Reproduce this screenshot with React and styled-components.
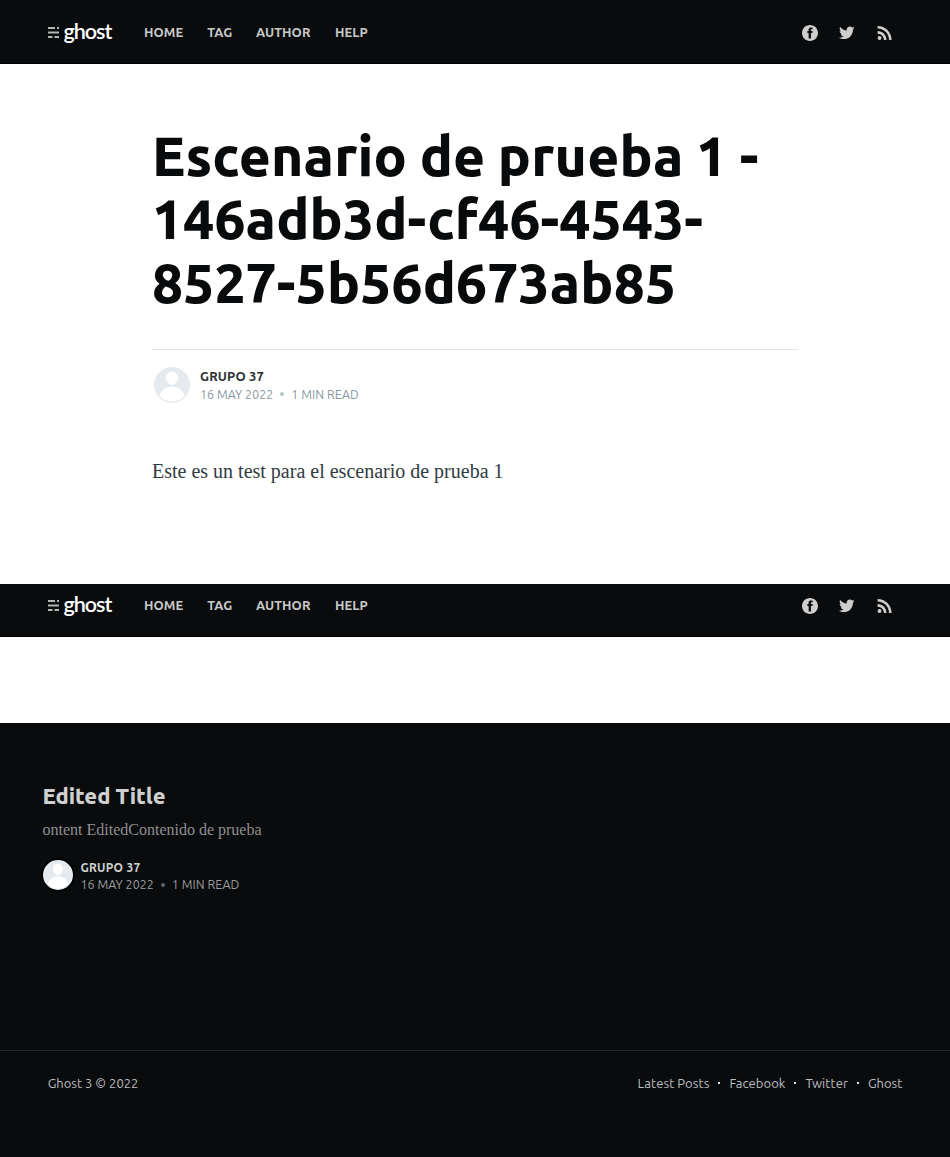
import React from 'react';
import styled, { createGlobalStyle } from 'styled-components';

const GlobalStyle = createGlobalStyle`
  *, *::before, *::after { box-sizing: border-box; }
  html, body, #root { margin: 0; padding: 0; }
  body {
    background: #fff;
    color: #3a4145;
    font-family: Ubuntu, "Noto Sans", "Open Sans", sans-serif;
  }
  a { color: inherit; text-decoration: none; }
  h1, h2, p { margin: 0; }
`;

const Bar = styled.header`
  display: flex;
  align-items: center;
  height: ${(p) => (p.$short ? 53 : 64)}px;
  padding: 0 47px ${(p) => (p.$short ? 11 : 0)}px 48px;
  background: #0a0b0c;
  border-bottom: 1px solid #000;
`;

const Brand = styled.a`
  display: flex;
  align-items: center;
  width: 96px;
  height: 30px;
`;

const LogoMark = styled.svg`
  display: block;
  width: 11px;
  height: 12px;
  margin: 1px 4.5px 0 0;
`;

const LogoText = styled.span`
  margin-top: -2px;
  color: #fff;
  font: 600 21.5px/30px Lato, sans-serif;
  letter-spacing: -1px;
`;

const Menu = styled.nav`
  display: flex;
  flex: 1;
`;

const MenuLink = styled.a`
  width: ${(p) => p.$width}px;
  color: #c8caca;
  font-size: 13px;
  font-weight: 600;
  line-height: 20px;
  letter-spacing: 0.08px;
  white-space: nowrap;
`;

const Social = styled.div`
  display: flex;
  align-items: center;
  margin: 3px 7.5px 0 0;
`;

const SocialLink = styled.a`
  display: block;
  margin-top: ${(p) => p.$lift || 0}px;
  margin-left: ${(p) => p.$gap || 0}px;

  svg {
    display: block;
    width: ${(p) => p.$size}px;
    height: ${(p) => p.$size}px;
    fill: #cecece;
  }
`;

const Article = styled.article`
  width: 646px;
  height: 520px;
  margin: 0 auto;
  padding-top: 60px;
`;

const Title = styled.h1`
  color: #090a0b;
  font-size: 55px;
  font-weight: 800;
  line-height: 63.25px;
  letter-spacing: 0.18px;
  word-spacing: -0.9px;
`;

const Byline = styled.div`
  display: flex;
  align-items: flex-start;
  margin-top: 35px;
  padding: 15px 0 0;
  border-top: 1px solid #e3e6e8;
`;

const Avatar = styled.span`
  display: block;
  flex: none;
  width: ${(p) => p.$size}px;
  height: ${(p) => p.$size}px;
  border: 2px solid ${(p) => (p.$dark ? '#000' : '#fff')};
  border-radius: 50%;
  background: #e4eaee;
  overflow: hidden;

  svg { display: block; width: 100%; height: 100%; fill: #fff; }
`;

const Meta = styled.div`
  display: flex;
  flex-direction: column;
  margin: ${(p) => (p.$dark ? '1px 0 0 5.5px' : '2px 0 0 8px')};
`;

const AuthorName = styled.span`
  color: ${(p) => (p.$dark ? '#d0d1d1' : '#2b3034')};
  font-size: ${(p) => (p.$dark ? 12 : 13)}px;
  font-weight: 600;
  line-height: ${(p) => (p.$dark ? 17 : 18)}px;
  letter-spacing: ${(p) => (p.$dark ? 0.25 : 0.15)}px;
`;

const MetaLine = styled.span`
  display: flex;
  color: ${(p) => (p.$dark ? '#9b9e9f' : '#87979f')};
  font-size: 12.4px;
  line-height: ${(p) => (p.$dark ? 17 : 18)}px;
  letter-spacing: 0.05px;
  white-space: nowrap;
`;

const Bullet = styled.span`
  width: 4px;
  height: 4px;
  margin: 7px 7px 0 7px;
  border-radius: 50%;
  background: currentColor;
  opacity: 0.6;
`;

const Body = styled.p`
  margin-top: 50px;
  font: 20px/32px "Liberation Serif", serif;
  color: #313b42;
`;

const Spacer = styled.div`
  height: 86px;
  background: #fff;
`;

const ReadNext = styled.aside`
  height: 327px;
  padding: 58px 42.5px 0;
  background: #0a0b0c;
`;

const CardTitle = styled.h2`
  color: #d0d0d0;
  font-size: 22px;
  font-weight: 800;
  line-height: 30px;
  letter-spacing: -0.05px;
`;

const Excerpt = styled.p`
  margin-top: 6px;
  color: #8e8f90;
  font: 16px/26px "Liberation Serif", serif;
`;

const CardByline = styled.div`
  display: flex;
  margin: 15px 0 0 -1.5px;
`;

const Footer = styled.footer`
  display: flex;
  justify-content: space-between;
  height: 107px;
  padding: 22px 47.7px 0;
  border-top: 1px solid #242627;
  background: #0a0b0c;
  color: #bdbfc0;
  font-size: 13px;
  line-height: 20px;
`;

const FooterNav = styled.nav`
  display: flex;
`;

const FooterLink = styled.a`
  letter-spacing: ${(p) => p.$track}px;

  &:not(:first-child)::before {
    content: "";
    display: inline-block;
    width: 2px;
    height: 2px;
    margin: 0 9px;
    background: #e2e2e2;
    vertical-align: 4px;
  }
`;

const FacebookIcon = () => (
  <svg viewBox="0 0 32 32">
    <path d="M16 0c8.837 0 16 7.163 16 16s-7.163 16-16 16S0 24.837 0 16 7.163 0 16 0zm5.204 4.911h-3.546c-2.103 0-4.443.885-4.443 3.934.01 1.062 0 2.08 0 3.225h-2.433v3.872h2.509v11.147h4.61v-11.22h3.042l.275-3.81h-3.397s.007-1.695 0-2.187c0-1.205 1.253-1.136 1.329-1.136.596 0 1.756.002 2.054 0V4.911z" />
  </svg>
);

const TwitterIcon = () => (
  <svg viewBox="0 0 32 32">
    <path d="M30.063 7.313c-.813 1.125-1.75 2.125-2.875 2.938v.75c0 1.563-.188 3.125-.688 4.625a15.088 15.088 0 0 1-2.063 4.438c-.875 1.438-2 2.688-3.25 3.813a15.015 15.015 0 0 1-4.625 2.563c-1.813.688-3.75 1-5.75 1-3.25 0-6.188-.875-8.875-2.625.438.063.875.125 1.375.125 2.688 0 5.063-.875 7.188-2.5-1.25 0-2.375-.375-3.375-1.125s-1.688-1.688-2.063-2.875c.438.063.813.125 1.125.125.5 0 1-.063 1.5-.25-1.313-.25-2.438-.938-3.313-1.938a5.673 5.673 0 0 1-1.313-3.688v-.063c.813.438 1.688.688 2.625.688a5.228 5.228 0 0 1-1.875-2c-.5-.875-.688-1.813-.688-2.75 0-1.063.25-2.063.75-2.938 1.438 1.75 3.188 3.188 5.25 4.25s4.313 1.688 6.688 1.813a5.579 5.579 0 0 1 1.5-5.438c1.125-1.125 2.5-1.688 4.125-1.688s3.063.625 4.188 1.813a11.48 11.48 0 0 0 3.688-1.375c-.438 1.375-1.313 2.438-2.563 3.188 1.125-.125 2.188-.438 3.313-.875z" />
  </svg>
);

const RssIcon = () => (
  <svg viewBox="0 0 24 24">
    <circle cx="6.18" cy="17.82" r="2.18" />
    <path d="M4 4.44v2.83c7.03 0 12.73 5.7 12.73 12.73h2.83c0-8.59-6.97-15.56-15.56-15.56zm0 5.66v2.83c3.9 0 7.07 3.17 7.07 7.07h2.83c0-5.47-4.43-9.9-9.9-9.9z" />
  </svg>
);

const Person = () => (
  <svg viewBox="0 0 24 24">
    <path d="M3.513 18.998C4.749 15.504 8.082 13 12 13s7.251 2.504 8.487 5.998C18.47 21.442 15.417 23 12 23s-6.47-1.558-8.487-3.998zM12 12c2.21 0 4-2.79 4-5s-1.79-4-4-4-4 1.79-4 4 1.79 5 4 5z" />
  </svg>
);

const MENU = [
  { label: 'HOME', width: 63.3 },
  { label: 'TAG', width: 48.7 },
  { label: 'AUTHOR', width: 79 },
  { label: 'HELP', width: 40 },
];

const FOOTER_LINKS = [
  { label: 'Latest Posts', track: 0.08 },
  { label: 'Facebook', track: 0.06 },
  { label: 'Twitter', track: 0.08 },
  { label: 'Ghost', track: 0 },
];

function SiteNav({ short }) {
  return (
    <Bar $short={short}>
      <Brand href="#">
        <LogoMark viewBox="0 0 11 12">
          <path fill="#b4b6b5" d="M0 1h7v2H0zM9 1h2v2H9zM0 5.4h11v2H0zM0 10h4.5v2H0zM6.5 10H11v2H6.5z" />
        </LogoMark>
        <LogoText>ghost</LogoText>
      </Brand>
      <Menu>
        {MENU.map((m) => (
          <MenuLink key={m.label} href="#" $width={m.width}>{m.label}</MenuLink>
        ))}
      </Menu>
      <Social>
        <SocialLink href="#" $size={16}><FacebookIcon /></SocialLink>
        <SocialLink href="#" $size={17.6} $gap={20.1}><TwitterIcon /></SocialLink>
        <SocialLink href="#" $size={21.6} $gap={18.2} $lift={-1.4}><RssIcon /></SocialLink>
      </Social>
    </Bar>
  );
}

function PostMeta({ dark }) {
  return (
    <>
      <Avatar $size={dark ? 34 : 40} $dark={dark}><Person /></Avatar>
      <Meta $dark={dark}>
        <AuthorName $dark={dark}>GRUPO 37</AuthorName>
        <MetaLine $dark={dark}>
          16 MAY 2022
          <Bullet />
          1 MIN READ
        </MetaLine>
      </Meta>
    </>
  );
}

export default function App() {
  return (
    <>
      <GlobalStyle />
      <SiteNav />
      <Article>
        <Title>Escenario de prueba 1 - 146adb3d-cf46-4543-8527-5b56d673ab85</Title>
        <Byline><PostMeta /></Byline>
        <Body>Este es un test para el escenario de prueba 1</Body>
      </Article>
      <SiteNav short />
      <Spacer />
      <ReadNext>
        <CardTitle>Edited Title</CardTitle>
        <Excerpt>ontent EditedContenido de prueba</Excerpt>
        <CardByline><PostMeta dark /></CardByline>
      </ReadNext>
      <Footer>
        <span>Ghost 3 © 2022</span>
        <FooterNav>
          {FOOTER_LINKS.map((l) => (
            <FooterLink key={l.label} href="#" $track={l.track}>{l.label}</FooterLink>
          ))}
        </FooterNav>
      </Footer>
    </>
  );
}
